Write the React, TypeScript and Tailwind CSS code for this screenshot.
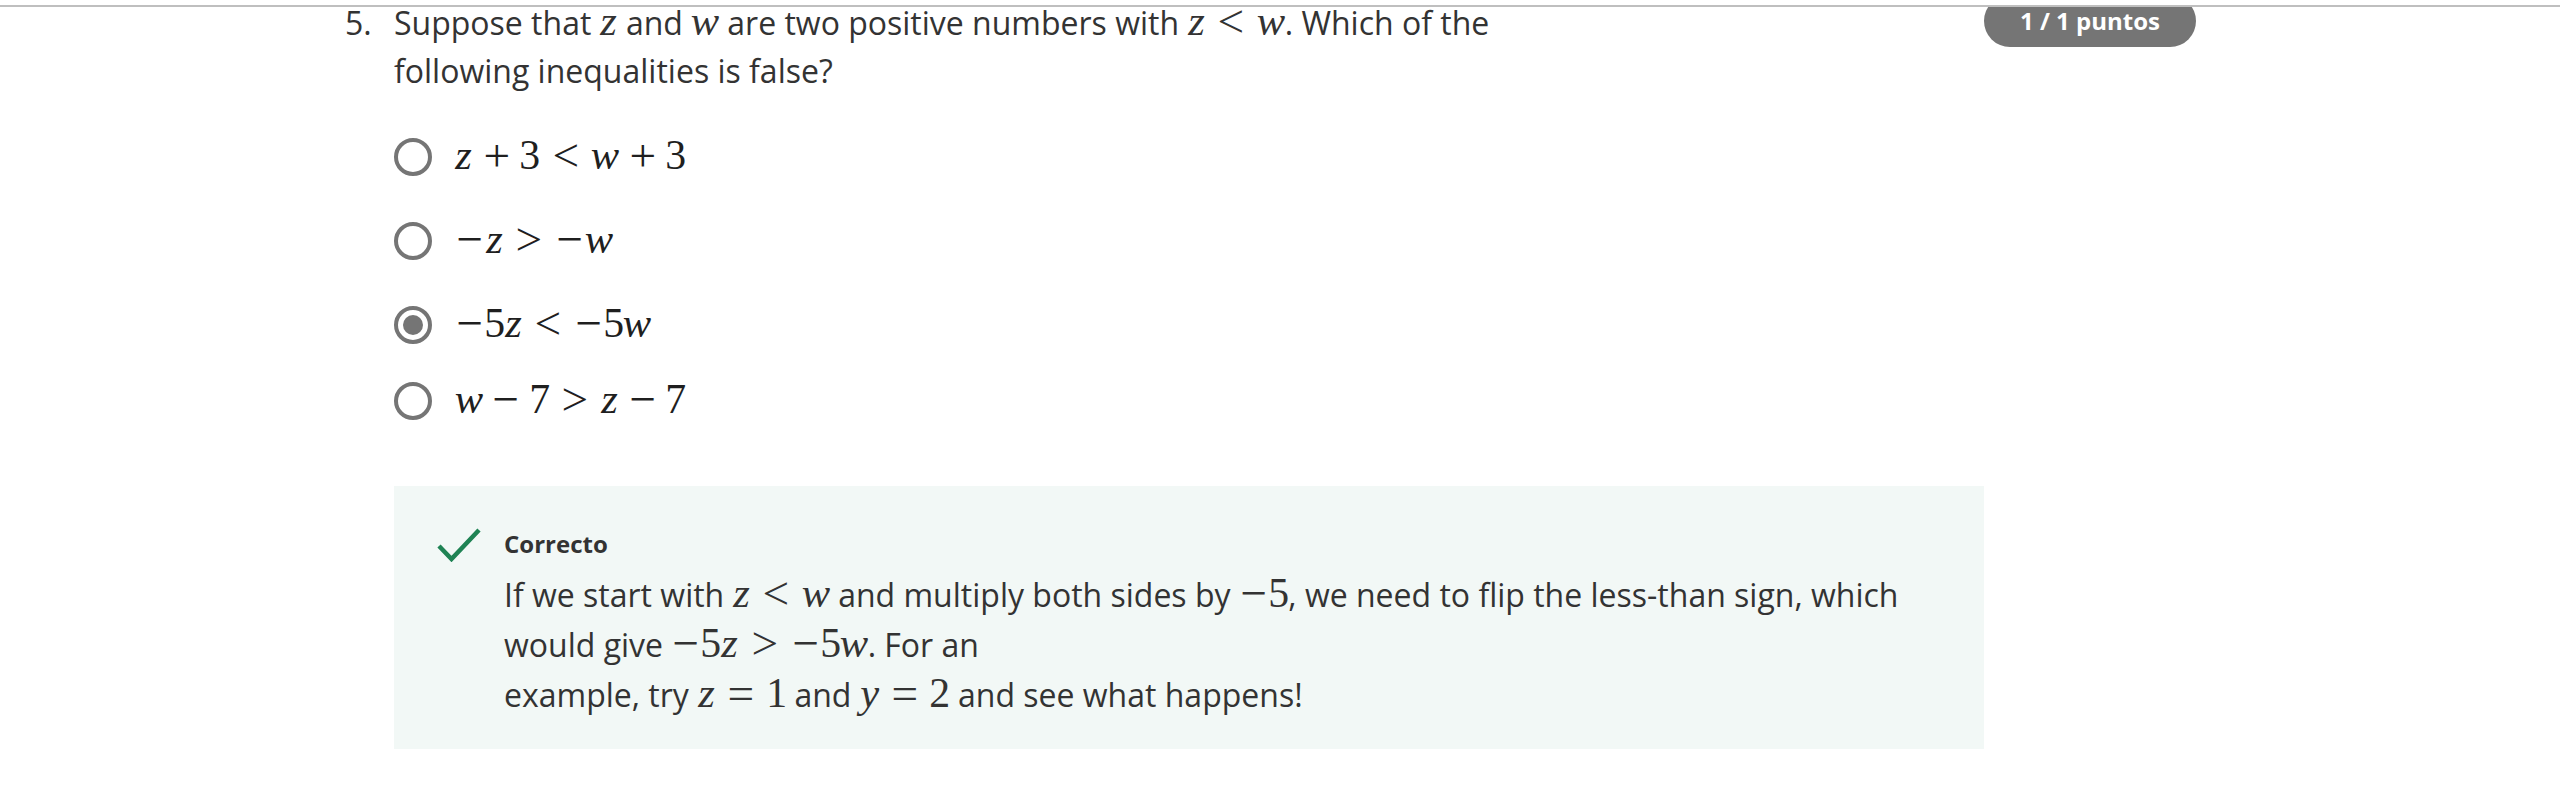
import React from 'react';

type Kind = 'v' | 'n' | 'b' | 'r' | 'u';
type Tok = [string, Kind];

function glyphClass(ch: string, kind: Kind): string {
  let cls = 'inline-block text-center';
  if (ch === 'z') cls += ' w-[0.465em] italic';
  else if (ch === 'w') cls += ' w-[0.716em] italic';
  else if (ch === 'y') cls += ' w-[0.49em] italic';
  else if (kind === 'n') cls += ' w-[0.5em]';
  else cls += ' w-[0.778em]';
  if (kind === 'b') cls += ' mx-[0.222em]';
  if (kind === 'r') cls += ' mx-[0.278em]';
  return cls;
}

function innerClass(kind: Kind): string {
  if (kind === 'v') return 'inline-block scale-[1.1] origin-[50%_84%]';
  if (kind === 'n') return 'inline-block scale-[1.08] origin-[50%_84%]';
  return 'inline-block scale-[1.22] origin-[50%_58%]';
}

function M({ t }: { t: Tok[] }) {
  return (
    <span className="inline-block whitespace-nowrap text-[1.21em] leading-none font-['Liberation_Serif',serif]">
      {t.map(([ch, k], i) => (
        <span key={i} className={glyphClass(ch, k)}>
          <span className={innerClass(k)}>{ch}</span>
        </span>
      ))}
    </span>
  );
}

const Z: Tok[] = [['z', 'v']];
const W: Tok[] = [['w', 'v']];

function Radio({ checked }: { checked?: boolean }) {
  return (
    <span className="w-[38px] h-[38px] shrink-0 rounded-full border-4 border-[#757575] flex items-center justify-center">
      {checked ? <span className="w-[20px] h-[20px] rounded-full bg-[#757575]" /> : null}
    </span>
  );
}

function Check() {
  return (
    <svg width="44" height="34" viewBox="0 0 44 34" fill="none">
      <path d="M2 18 L14.5 31 L42 2" stroke="#1f8354" strokeWidth="4.5" strokeLinecap="butt" strokeLinejoin="miter" />
    </svg>
  );
}

export default function App() {
  const options: { t: Tok[]; checked?: boolean; mt: string }[] = [
    {
      t: [['z', 'v'], ['+', 'b'], ['3', 'n'], ['<', 'r'], ['w', 'v'], ['+', 'b'], ['3', 'n']],
      mt: 'mt-[38px]',
    },
    {
      t: [['−', 'u'], ['z', 'v'], ['>', 'r'], ['−', 'u'], ['w', 'v']],
      mt: 'mt-[36px]',
    },
    {
      t: [['−', 'u'], ['5', 'n'], ['z', 'v'], ['<', 'r'], ['−', 'u'], ['5', 'n'], ['w', 'v']],
      checked: true,
      mt: 'mt-[36px]',
    },
    {
      t: [['w', 'v'], ['−', 'b'], ['7', 'n'], ['>', 'r'], ['z', 'v'], ['−', 'b'], ['7', 'n']],
      mt: 'mt-[28px]',
    },
  ];

  return (
    <div className="relative w-[2560px] h-[805px] overflow-hidden bg-white text-[#333333] font-['Open_Sans',sans-serif]">
      <div className="absolute top-0 left-0 right-0 h-[7px] bg-white border-b-2 border-[#bfbfbf] z-10" />
      <div className="flex pl-[345px] -mt-[5px]">
        <div className="w-[49px] shrink-0 pt-[4px] text-[32px] leading-[48px]">5.</div>
        <div className="w-[1590px] shrink-0 flex flex-col">
          <div className="pt-[4px] text-[32px] leading-[48px] whitespace-nowrap">
            Suppose that <M t={Z} /> and <M t={W} /> are two positive numbers with{' '}
            <M t={[['z', 'v'], ['<', 'r'], ['w', 'v']]} />. Which of the
            <br />
            following inequalities is false?
          </div>
          <div className="flex flex-col">
            {options.map((o, i) => (
              <div key={i} className={'flex items-center h-[48px] ' + o.mt}>
                <Radio checked={o.checked} />
                <span className="ml-[23px] text-[32px] leading-[48px] text-[#1f1f1f]">
                  <M t={o.t} />
                </span>
              </div>
            ))}
          </div>
          <div className="mt-[61px] bg-[#f2f8f6] pl-[43px] pt-[42px] pb-[29px] flex">
            <div className="w-[67px] shrink-0">
              <Check />
            </div>
            <div className="flex flex-col">
              <div className="h-[32px] flex items-center text-[24px] font-bold leading-[32px]">Correcto</div>
              <div className="mt-[10px] text-[32px] leading-[50px] whitespace-nowrap">
                If we start with <M t={[['z', 'v'], ['<', 'r'], ['w', 'v']]} /> and multiply both sides by{' '}
                <M t={[['−', 'u'], ['5', 'n']]} />, we need to flip the less-than sign, which
                <br />
                would give <M t={[['−', 'u'], ['5', 'n'], ['z', 'v'], ['>', 'r'], ['−', 'u'], ['5', 'n'], ['w', 'v']]} />. For an
                <br />
                example, try <M t={[['z', 'v'], ['=', 'r'], ['1', 'n']]} /> and{' '}
                <M t={[['y', 'v'], ['=', 'r'], ['2', 'n']]} /> and see what happens!
              </div>
            </div>
          </div>
        </div>
        <div className="w-[212px] shrink-0">
          <div className="w-[212px] h-[52px] rounded-full bg-[#757575] text-white text-[24px] font-bold leading-[36px] flex items-center justify-center">
            1 / 1 puntos
          </div>
        </div>
      </div>
    </div>
  );
}
